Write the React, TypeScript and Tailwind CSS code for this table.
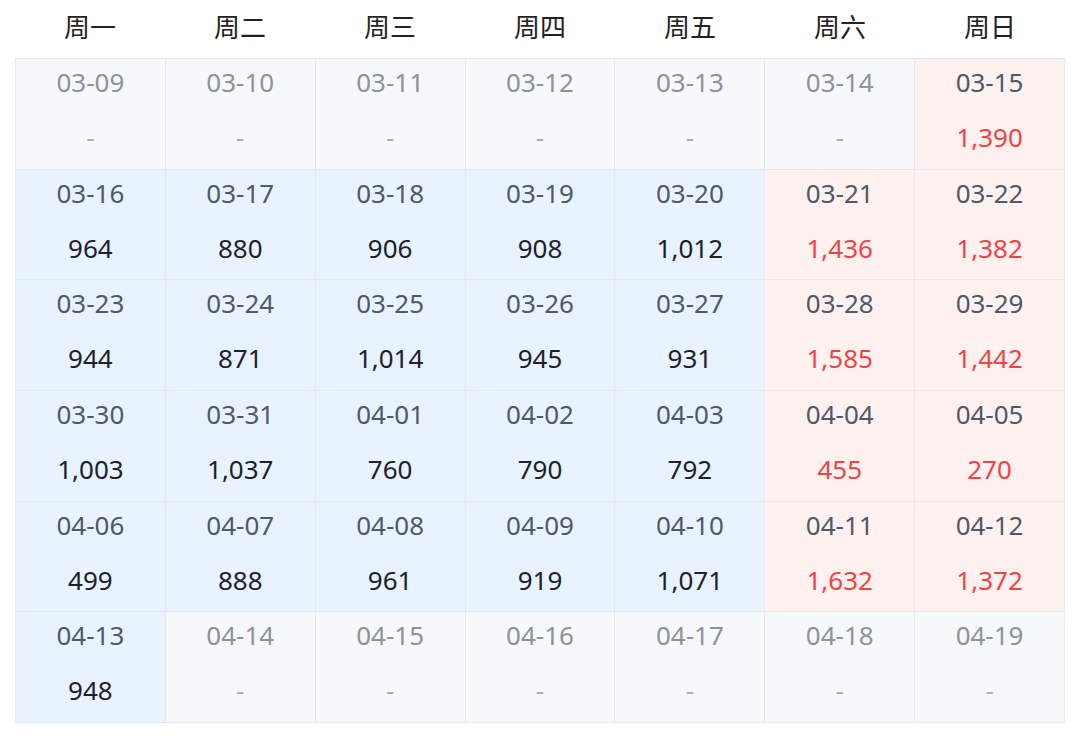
const WEEKDAYS = ['周一', '周二', '周三', '周四', '周五', '周六', '周日'];

// value per day starting 03-09 (Mon); null = no data
const VALUES: (number | null)[] = [
  null, null, null, null, null, null, 1390,
  964, 880, 906, 908, 1012, 1436, 1382,
  944, 871, 1014, 945, 931, 1585, 1442,
  1003, 1037, 760, 790, 792, 455, 270,
  499, 888, 961, 919, 1071, 1632, 1372,
  948, null, null, null, null, null, null,
];

function dateLabel(offset: number) {
  const d = new Date(2020, 2, 9 + offset);
  const mm = String(d.getMonth() + 1).padStart(2, '0');
  const dd = String(d.getDate()).padStart(2, '0');
  return `${mm}-${dd}`;
}

export default function App() {
  return (
    <div className="w-[1080px] h-[739px] bg-white px-[15px] font-['Noto_Sans','Noto_Sans_CJK_SC',sans-serif]">
      <div className="grid grid-cols-7 h-[58px]">
        {WEEKDAYS.map(w => (
          <div key={w} className="text-center text-[26px] leading-[54px] text-[#222]">{w}</div>
        ))}
      </div>

      <div className="grid grid-cols-7 border-t border-l border-[#e6e8eb]">
        {VALUES.map((v, i) => {
          const weekend = i % 7 >= 5;
          const empty = v === null;
          const bg = empty ? 'bg-[#f7f8fa]' : weekend ? 'bg-[#fff1f0]' : 'bg-[#e8f3ff]';
          return (
            <div key={i} className={`h-[110.67px] border-r border-b border-[#e6e8eb] ${bg} flex flex-col items-center pt-[4px] text-[26px]`}>
              <div className={`leading-[38px] ${empty ? 'text-[#8c939d]' : 'text-[#4e5969]'}`}>{dateLabel(i)}</div>
              <div className={`mt-[17px] leading-[38px] ${empty ? 'text-[#a9aeb8]' : weekend ? 'text-[#f04444]' : 'text-[#1d2129]'}`}>
                {empty ? '-' : v.toLocaleString('en-US')}
              </div>
            </div>
          );
        })}
      </div>
    </div>
  );
}
